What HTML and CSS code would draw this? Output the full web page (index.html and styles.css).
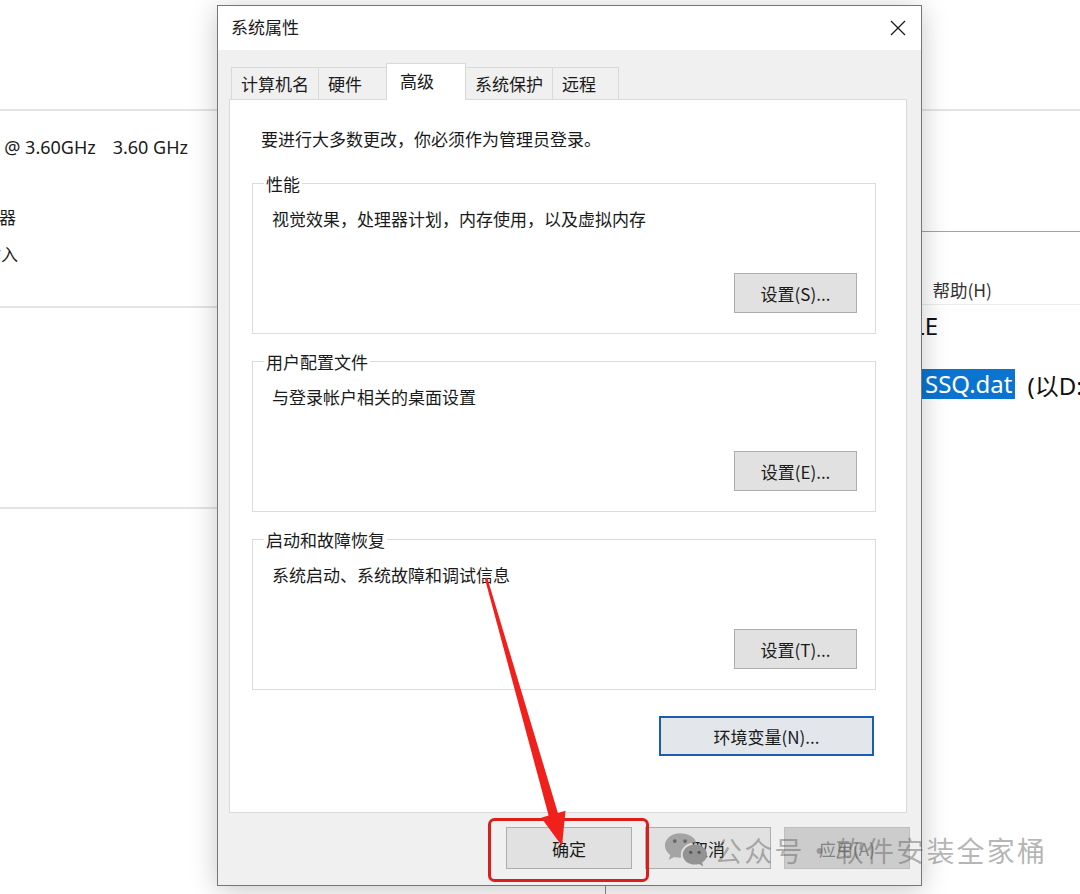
FILE: index.html
```html
<!DOCTYPE html>
<html>
  <head>
    <meta charset="UTF-8" />
    <title>系统属性</title>
    <link rel="stylesheet" href="styles.css">
  </head>
  <body>
    <div class="desk">

      <section class="about">
        <div class="about-top"></div>
        <div class="about-row row-cpu">
          <div class="cut cut-cpu"><span>Intel(R) Core(TM) i7-9700K CPU @ 3.60GHz</span><span>3.60 GHz</span></div>
        </div>
        <div class="about-row row-sys">
          <div class="cut cut-sys"><span>64 位操作系统, 基于 x64 的处理器</span></div>
        </div>
        <div class="about-row row-pen">
          <div class="cut cut-pen"><span>没有可用于此显示器的笔或触控输入</span></div>
        </div>
        <div class="about-line line-1"></div>
        <div class="about-line line-2"></div>
      </section>

      <section class="notepad">
        <div class="np-title"></div>
        <div class="np-menu">
          <span>文件(F)</span><span>编辑(E)</span><span>格式(O)</span><span>查看(V)</span><span>帮助(H)</span>
        </div>
        <div class="np-body">
          <div class="np-line">
            <div class="cut cut-np1"><span>SETUP.FILE</span></div>
          </div>
          <div class="np-line">
            <div class="cut cut-np2"><span>激活文件 </span></div>
            <span class="np-sel">SSQ.dat</span>
            <span class="np-tail">(以D:\SSQ为例)</span>
          </div>
        </div>
      </section>

      <div class="dialog">
        <div class="titlebar">
          <span class="title">系统属性</span>
          <span class="close">
            <svg width="16" height="16" viewBox="0 0 16 16"><path d="M1 1L15 15M15 1L1 15" stroke="#1a1a1a" stroke-width="1.3" fill="none"/></svg>
          </span>
        </div>

        <div class="dlg-body">
          <div class="tabs">
            <div class="tab">计算机名</div>
            <div class="tab">硬件</div>
            <div class="tab tab-sel">高级</div>
            <div class="tab">系统保护</div>
            <div class="tab tab-last">远程</div>
          </div>

          <div class="page">
            <p class="intro">要进行大多数更改，你必须作为管理员登录。</p>

            <div class="group group-first">
              <span class="group-label">性能</span>
              <p class="group-desc">视觉效果，处理器计划，内存使用，以及虚拟内存</p>
              <button class="btn btn-set">设置(S)...</button>
            </div>

            <div class="group">
              <span class="group-label">用户配置文件</span>
              <p class="group-desc">与登录帐户相关的桌面设置</p>
              <button class="btn btn-set">设置(E)...</button>
            </div>

            <div class="group">
              <span class="group-label">启动和故障恢复</span>
              <p class="group-desc">系统启动、系统故障和调试信息</p>
              <button class="btn btn-set">设置(T)...</button>
            </div>

            <button class="btn btn-env">环境变量(N)...</button>
          </div>

          <div class="actions">
            <button class="btn btn-act">确定</button>
            <button class="btn btn-act">取消</button>
            <button class="btn btn-act btn-off">应用(A)</button>
          </div>
        </div>
      </div>

      <div class="watermark">
        <svg width="44" height="38" viewBox="0 0 47 40">
          <path d="M17 2C8.2 2 1 7.9 1 15.2c0 4.1 2.2 7.7 5.7 10.1L5 30.5l6-3.1c1.9.5 3.9.8 6 .8.5 0 1 0 1.5-.1-.3-1.1-.5-2.2-.5-3.4C18 17.6 24.7 12 33 12c.5 0 1 0 1.4.1C33.3 6.3 25.9 2 17 2z" fill="#a4a4a4"/>
          <circle cx="11.5" cy="10.5" r="2" fill="#666"/>
          <circle cx="22.5" cy="10.5" r="2" fill="#666"/>
          <path d="M33 14c-7.2 0-13 4.8-13 10.8S25.8 35.6 33 35.6c1.5 0 3-.2 4.3-.6l4.7 2.4-1.3-4C44 31.3 46 28.2 46 24.8 46 18.8 40.2 14 33 14z" fill="#939393"/>
          <circle cx="28.5" cy="22.5" r="1.7" fill="#555"/>
          <circle cx="37.5" cy="22.5" r="1.7" fill="#555"/>
        </svg>
        <span class="wm-text">公众号<span class="wm-dot">·</span>软件安装全家桶</span>
      </div>

      <svg class="marks" width="1080" height="894" viewBox="0 0 1080 894">
        <rect x="489.5" y="819.5" width="158" height="61" rx="5" fill="none" stroke="#dc1e1a" stroke-width="3"/>
        <polygon points="484.8,578.4 487.2,577.6 557.9,812.9 565.5,810.8 562,846 541.2,817.7 548.6,815.6" fill="#f0201c"/>
      </svg>

    </div>
  </body>
</html>
```

FILE: styles.css
```css
body {
  margin: 0;
  background: #fff;
  font-family: "Noto Sans CJK SC", "Noto Sans", sans-serif;
  color: #1a1a1a;
}

.desk {
  position: relative;
  width: 1080px;
  height: 894px;
  overflow: hidden;
}

/* clipped text that only shows its tail end */
.cut {
  display: flex;
  justify-content: flex-end;
  overflow: hidden;
  white-space: nowrap;
  flex-shrink: 0;
}

.cut span {
  flex-shrink: 0;
}

/* ---- settings page behind ---- */
.about {
  position: absolute;
  left: 0;
  top: 0;
  width: 1080px;
  height: 894px;
  font-family: "Noto Sans", "Noto Sans CJK SC", sans-serif;
  font-size: 17px;
}

.about-top {
  height: 109px;
  border-bottom: 2px solid #e4e4e4;
}

.about-row {
  height: 36px;
  display: flex;
  align-items: center;
}

.row-cpu {
  margin-top: 18px;
}

.row-sys {
  margin-top: 33px;
}

.row-pen {
  margin-top: 1px;
}

.cut-cpu {
  width: 188px;
  gap: 17px;
  font-size: 18px;
}

.cut-sys {
  width: 16px;
}

.cut-pen {
  width: 18px;
}

.about-line {
  border-top: 2px solid #e4e4e4;
}

.line-1 {
  margin-top: 35px;
}

.line-2 {
  margin-top: 199px;
}

/* ---- notepad behind ---- */
.notepad {
  position: absolute;
  left: 605px;
  top: 231px;
  width: 480px;
  height: 670px;
  background: #fff;
  border-left: 1px solid #8a8a8a;
  border-top: 1px solid #a2a2a2;
  overflow: hidden;
}

.np-title {
  height: 42px;
}

.np-menu {
  height: 30px;
  display: flex;
  justify-content: flex-end;
  align-items: center;
  gap: 18px;
  padding-right: 94px;
  font-size: 17.5px;
  color: #333;
  border-bottom: 1px solid #ececec;
  white-space: nowrap;
}

.np-body {
  padding-top: 2px;
  font-family: "Noto Sans", sans-serif;
  font-size: 24px;
  color: #111;
}

.np-line {
  height: 36px;
  display: flex;
  align-items: center;
  white-space: nowrap;
  margin-bottom: 23px;
}

.cut-np1 {
  width: 332px;
}

.cut-np2 {
  width: 316px;
}

.np-sel {
  background: #0a74d0;
  color: #fff;
  line-height: 30px;
  padding: 0 3px;
}

.np-tail {
  margin-left: 12px;
  font-family: "Noto Sans", "Noto Sans CJK SC", sans-serif;
}

/* ---- dialog ---- */
.dialog {
  position: absolute;
  left: 217px;
  top: 5px;
  width: 705px;
  height: 881px;
  box-sizing: border-box;
  border: 1px solid #767676;
  background: #f0f0f0;
  display: flex;
  flex-direction: column;
  box-shadow: 0 4px 26px rgba(0, 0, 0, 0.22);
  font-size: 17px;
}

.titlebar {
  height: 44px;
  background: #fff;
  display: flex;
  align-items: center;
  padding-left: 13px;
}

.title {
  flex: 1;
  padding-bottom: 4px;
}

.close {
  width: 46px;
  height: 44px;
  display: flex;
  align-items: center;
  justify-content: center;
}

.dlg-body {
  flex: 1;
  padding: 13px 14px 0 11px;
  display: flex;
  flex-direction: column;
}

.tabs {
  height: 36px;
  display: flex;
  align-items: flex-end;
  padding-left: 2px;
  position: relative;
  z-index: 1;
}

.tab {
  height: 32px;
  min-width: 71px;
  box-sizing: border-box;
  padding: 0 9px 1px;
  display: flex;
  align-items: center;
  background: #f0f0f0;
  border: 1px solid #d9d9d9;
  border-bottom: none;
  margin-right: -1px;
}

.tab-sel {
  height: 37px;
  min-width: 80px;
  margin: 0 -1px -1px -2px;
  padding: 0 13px 4px;
  background: #fff;
}

.tab-last {
  min-width: 67px;
}

.page {
  height: 714px;
  box-sizing: border-box;
  background: #fff;
  border: 1px solid #d9d9d9;
  padding: 0 30px 0 22px;
  display: flex;
  flex-direction: column;
}

.intro {
  margin: 27px 0 0 9px;
  line-height: 24px;
}

.group {
  height: 151px;
  box-sizing: border-box;
  border: 1px solid #dcdcdc;
  margin-top: 27px;
  padding: 0 18px 20px 19px;
  display: flex;
  flex-direction: column;
}

.group-first {
  margin-top: 32px;
}

.group-label {
  align-self: flex-start;
  margin: -12px 0 0 -8px;
  padding: 0 2px;
  line-height: 24px;
  background: #fff;
}

.group-desc {
  margin: 11px 0 0;
  line-height: 24px;
}

.btn {
  font-family: inherit;
  font-size: 17px;
  color: #1a1a1a;
  background: #e1e1e1;
  border: 1px solid #adadad;
  padding: 0;
}

.btn-set {
  margin-top: auto;
  align-self: flex-end;
  width: 123px;
  height: 40px;
}

.btn-env {
  margin: 26px 2px 0 0;
  align-self: flex-end;
  width: 215px;
  height: 40px;
  border: 2px solid #1a5fae;
  background: #e3e7ec;
}

.actions {
  display: flex;
  justify-content: flex-end;
  gap: 13px;
  margin: 14px -3px 0 0;
}

.btn-act {
  width: 126px;
  height: 42px;
}

.btn-off {
  background: #cccccc;
  border-color: #bfbfbf;
  color: #838383;
}

/* ---- overlays ---- */
.watermark {
  position: absolute;
  left: 664px;
  top: 830px;
  display: flex;
  align-items: center;
  gap: 6px;
}

.wm-text {
  font-size: 28px;
  letter-spacing: 2.2px;
  color: rgba(90, 90, 90, 0.45);
  white-space: nowrap;
}

.wm-dot {
  margin: 0 0 0 1px;
}

.marks {
  position: absolute;
  left: 0;
  top: 0;
  pointer-events: none;
}
```
